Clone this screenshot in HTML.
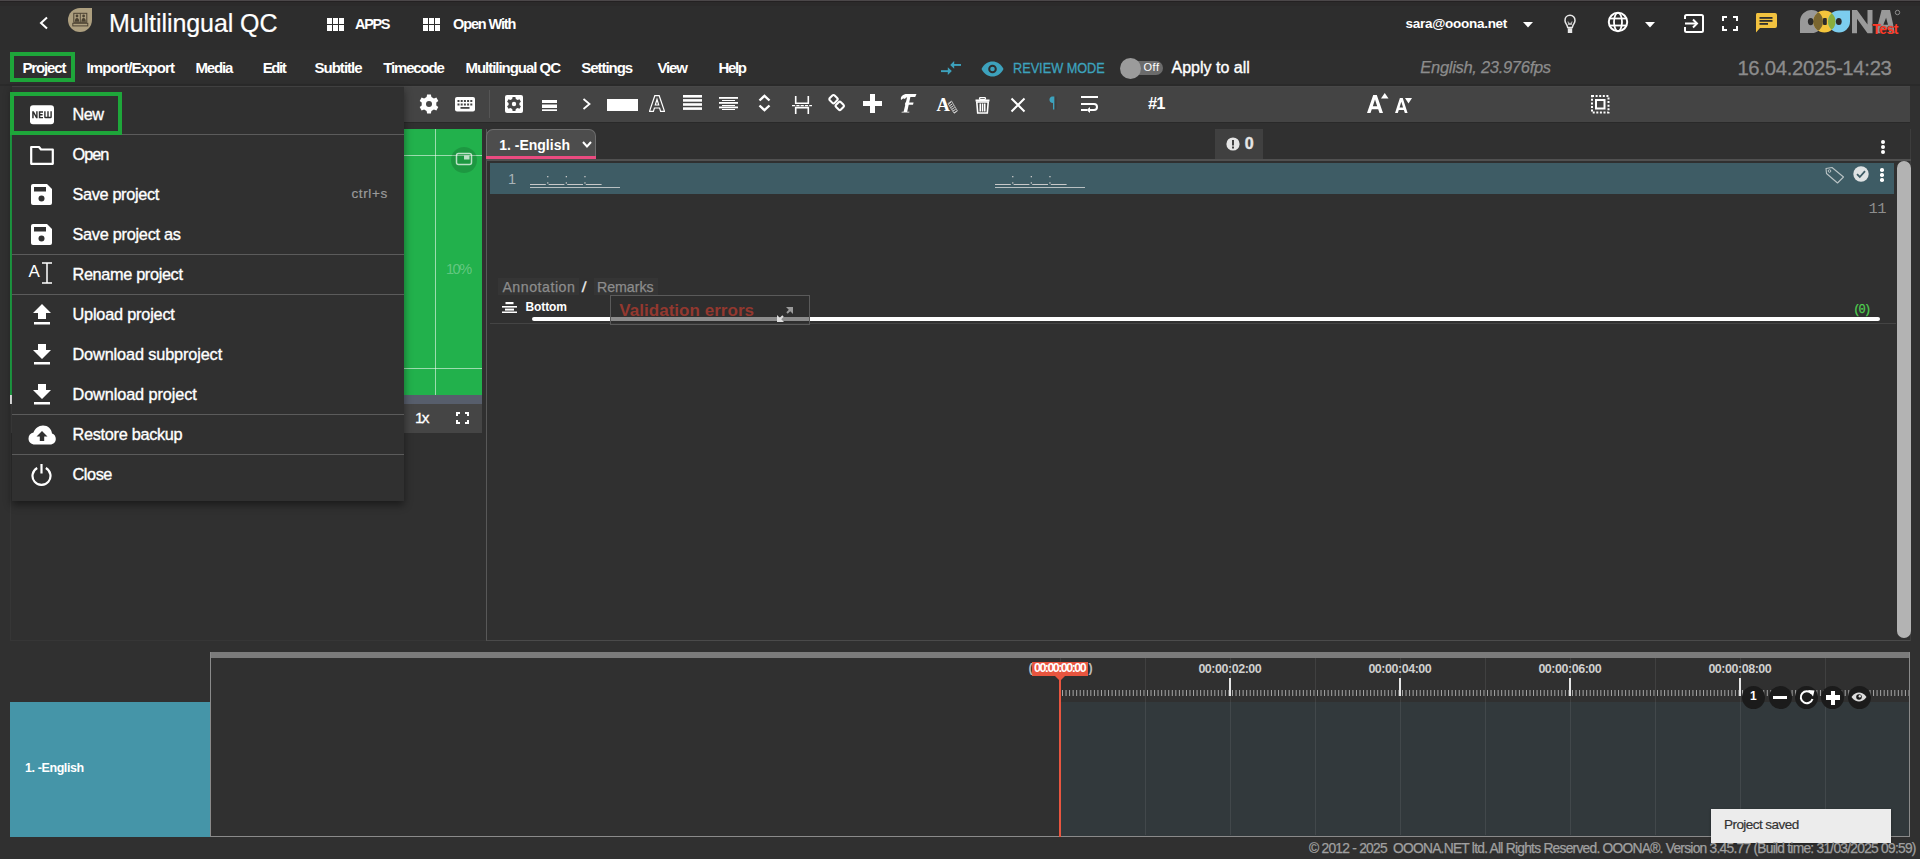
<!DOCTYPE html><html><head><meta charset="utf-8"><style>
html,body{margin:0;padding:0;}
body{width:1920px;height:859px;overflow:hidden;position:relative;background:#303030;font-family:'Liberation Sans',sans-serif;}
.t{position:absolute;white-space:nowrap;line-height:1;}
.r{position:absolute;display:block;}
</style></head><body>
<div class="r" style="left:0px;top:0px;width:1920px;height:50px;background:#2d2d2d;"></div>
<div class="r" style="left:0px;top:50px;width:1920px;height:36px;background:#2f2f2f;"></div>
<div class="r" style="left:0px;top:84px;width:1920px;height:2px;background:#2a2a2a;"></div>
<div class="r" style="left:0px;top:0px;width:1920px;height:1px;background:#4b4749;"></div>
<div class="r" style="left:0px;top:1px;width:1920px;height:1px;background:#242122;"></div>
<div class="r" style="left:0px;top:2px;width:1920px;height:4px;background:#2b2a2a;"></div>
<svg class="r" style="left:36px;top:14px;" width="16" height="18" viewBox="0 0 16 18"><polyline points="11,3.5 5,9 11,14.5" fill="none" stroke="#fff" stroke-width="2"/></svg>
<svg class="r" style="left:68px;top:8px;" width="24" height="24" viewBox="0 0 24 24"><path d="M12,0 H24 V12 A12,12 0 1 1 12,0 Z" fill="#ad9f7f"/><rect x="5.8" y="5.3" width="13" height="9" fill="none" stroke="#4b4232" stroke-width="1"/><line x1="12.3" y1="5.3" x2="12.3" y2="14.3" stroke="#4b4232" stroke-width="0.9"/><circle cx="9" cy="8" r="1.4" fill="#4b4232"/><path d="M6.8,13.8 Q6.8,10 9,10 Q11.2,10 11.2,13.8Z" fill="#4b4232"/><circle cx="15.6" cy="8" r="1.4" fill="#4b4232"/><path d="M13.4,13.8 Q13.4,10 15.6,10 Q17.8,10 17.8,13.8Z" fill="#4b4232"/><rect x="4.8" y="15.3" width="15" height="2.6" fill="none" stroke="#4b4232" stroke-width="1"/></svg>
<div class="t" style="left:109.0px;top:10.60px;font-family:'Liberation Sans',sans-serif;font-weight:400;font-style:normal;font-size:25px;color:#fff;letter-spacing:-0.071px;-webkit-text-stroke:0.2px #fff;">Multilingual QC</div>
<svg class="r" style="left:327px;top:18px;" width="17" height="13" viewBox="0 0 17 13"><rect x="0" y="0" width="5" height="6" fill="#fff"/><rect x="0" y="7" width="5" height="6" fill="#fff"/><rect x="6" y="0" width="5" height="6" fill="#fff"/><rect x="6" y="7" width="5" height="6" fill="#fff"/><rect x="12" y="0" width="5" height="6" fill="#fff"/><rect x="12" y="7" width="5" height="6" fill="#fff"/></svg>
<div class="t" style="left:355.0px;top:17.28px;font-family:'Liberation Sans',sans-serif;font-weight:700;font-style:normal;font-size:14.5px;color:#fff;letter-spacing:-1.333px;">APPS</div>
<svg class="r" style="left:423px;top:18px;" width="17" height="13" viewBox="0 0 17 13"><rect x="0" y="0" width="5" height="6" fill="#fff"/><rect x="0" y="7" width="5" height="6" fill="#fff"/><rect x="6" y="0" width="5" height="6" fill="#fff"/><rect x="6" y="7" width="5" height="6" fill="#fff"/><rect x="12" y="0" width="5" height="6" fill="#fff"/><rect x="12" y="7" width="5" height="6" fill="#fff"/></svg>
<div class="t" style="left:453.0px;top:17.28px;font-family:'Liberation Sans',sans-serif;font-weight:700;font-style:normal;font-size:14.5px;color:#fff;letter-spacing:-1.125px;">Open With</div>
<div class="t" style="left:1405.5px;top:16.84px;font-family:'Liberation Sans',sans-serif;font-weight:700;font-style:normal;font-size:13.5px;color:#fff;letter-spacing:-0.277px;">sara@ooona.net</div>
<svg class="r" style="left:1523px;top:22px;" width="10" height="6" viewBox="0 0 10 6"><polygon points="0,0 10,0 5,5.5" fill="#fff"/></svg>
<svg class="r" style="left:1564px;top:14px;" width="12" height="20" viewBox="0 0 12 20"><path d="M6,1.3 C3,1.3 1,3.6 1,6.4 C1,8.6 2.4,10 3.1,11.6 L3.7,13.6 H8.3 L8.9,11.6 C9.6,10 11,8.6 11,6.4 C11,3.6 9,1.3 6,1.3 Z" fill="none" stroke="#e8e8e8" stroke-width="1.5"/><polyline points="4,7.5 5,11 6,8.8 7,11 8,7.5" fill="none" stroke="#d8d8d8" stroke-width="0.9"/><rect x="3.8" y="14.2" width="4.4" height="4.8" fill="#e8e8e8"/></svg>
<svg class="r" style="left:1606px;top:11px;" width="24" height="22" viewBox="0 0 24 22"><circle cx="12" cy="11" r="9.2" fill="none" stroke="#fff" stroke-width="2"/><ellipse cx="12" cy="11" rx="4" ry="9.2" fill="none" stroke="#fff" stroke-width="1.8"/><line x1="3" y1="7.5" x2="21" y2="7.5" stroke="#fff" stroke-width="1.8"/><line x1="3" y1="14.5" x2="21" y2="14.5" stroke="#fff" stroke-width="1.8"/></svg>
<svg class="r" style="left:1645px;top:22px;" width="10" height="6" viewBox="0 0 10 6"><polygon points="0,0 10,0 5,5.5" fill="#fff"/></svg>
<svg class="r" style="left:1684px;top:14px;" width="20" height="19" viewBox="0 0 20 19"><path d="M1,5 V2.5 A1.5,1.5 0 0 1 2.5,1 H17.5 A1.5,1.5 0 0 1 19,2.5 V16.5 A1.5,1.5 0 0 1 17.5,18 H2.5 A1.5,1.5 0 0 1 1,16.5 V13" fill="none" stroke="#fff" stroke-width="2"/><line x1="1" y1="9.5" x2="13" y2="9.5" stroke="#fff" stroke-width="2"/><polyline points="9,5.5 13,9.5 9,13.5" fill="none" stroke="#fff" stroke-width="2"/></svg>
<svg class="r" style="left:1722px;top:16px;" width="16" height="15" viewBox="0 0 16 15"><path d="M1,5 V1 H5 M11,1 H15 V5 M15,10 V14 H11 M5,14 H1 V10" fill="none" stroke="#fff" stroke-width="2"/></svg>
<svg class="r" style="left:1755px;top:13px;" width="22" height="20" viewBox="0 0 22 20"><path d="M2,0 H20 A2,2 0 0 1 22,2 V13 A2,2 0 0 1 20,15 H5 L1,19.5 V2 A2,2 0 0 1 2,0 Z" fill="#f2c23f"/><rect x="4.5" y="4" width="13" height="1.8" fill="#2e2e2e"/><rect x="4.5" y="7" width="13" height="1.8" fill="#2e2e2e"/><rect x="4.5" y="10" width="8.5" height="1.8" fill="#2e2e2e"/></svg>
<svg class="r" style="left:1796px;top:4px;" width="112" height="34" viewBox="0 0 112 34"><defs><clipPath id="cy"><circle cx="28.4" cy="17.5" r="11.1"/></clipPath></defs><path d="M4,29 V17.5 A11.5,11.5 0 0 1 27,17.5 A11.5,11.5 0 0 1 15.5,29 Z" fill="#999"/><circle cx="28.4" cy="17.5" r="11.1" fill="#f4c53c"/><path d="M4,29 V17.5 A11.5,11.5 0 0 1 27,17.5 A11.5,11.5 0 0 1 15.5,29 Z" fill="#7a6630" clip-path="url(#cy)"/><path d="M43,6.5 H54 V17.5 A11,11 0 0 1 32,17.5 A11,11 0 0 1 43,6.5 Z" fill="#7ccdee"/><path d="M43,6.5 H54 V17.5 A11,11 0 0 1 32,17.5 A11,11 0 0 1 43,6.5 Z" fill="#8aae3c" clip-path="url(#cy)"/><ellipse cx="14.7" cy="17.6" rx="2.8" ry="3.6" fill="#2b2b2b"/><rect x="27" y="14" width="3.8" height="7" rx="1" fill="#2b2b2b"/><ellipse cx="42.8" cy="17.5" rx="2.9" ry="3.6" fill="#2b2b2b"/><path d="M56,29.3 V6 H61 L71.5,20.5 V6 H76.5 V29.3 H71.5 L61,14.8 V29.3 Z" fill="#999"/><path d="M79.7,29.3 L85.6,6 H94 L99,29.3 H93.5 L92.6,25 H86.4 L85.4,29.3 Z M87.3,20.8 H92 L90.1,13.8 Z" fill="#999" fill-rule="evenodd"/><circle cx="101.5" cy="8.5" r="2.2" fill="none" stroke="#999" stroke-width="0.9"/></svg>
<div class="t" style="left:1872.3px;top:22.99px;font-family:'Liberation Sans',sans-serif;font-weight:700;font-style:normal;font-size:13.8px;color:#ff3a28;letter-spacing:-0.433px;text-shadow:0 0 1px #222;">Test</div>
<div class="r" style="left:10px;top:52px;width:65px;height:30px;background:transparent;border:4px solid #1ea63a;box-sizing:border-box;"></div>
<div class="t" style="left:22.4px;top:60.40px;font-family:'Liberation Sans',sans-serif;font-weight:700;font-style:normal;font-size:15px;color:#fff;letter-spacing:-1.133px;">Project</div>
<div class="t" style="left:86.5px;top:60.30px;font-family:'Liberation Sans',sans-serif;font-weight:700;font-style:normal;font-size:15px;color:#fff;letter-spacing:-0.817px;">Import/Export</div>
<div class="t" style="left:195.4px;top:60.30px;font-family:'Liberation Sans',sans-serif;font-weight:700;font-style:normal;font-size:15px;color:#fff;letter-spacing:-1.150px;">Media</div>
<div class="t" style="left:262.7px;top:60.30px;font-family:'Liberation Sans',sans-serif;font-weight:700;font-style:normal;font-size:15px;color:#fff;letter-spacing:-1.400px;">Edit</div>
<div class="t" style="left:314.5px;top:60.30px;font-family:'Liberation Sans',sans-serif;font-weight:700;font-style:normal;font-size:15px;color:#fff;letter-spacing:-0.986px;">Subtitle</div>
<div class="t" style="left:383.2px;top:60.30px;font-family:'Liberation Sans',sans-serif;font-weight:700;font-style:normal;font-size:15px;color:#fff;letter-spacing:-1.143px;">Timecode</div>
<div class="t" style="left:465.5px;top:60.30px;font-family:'Liberation Sans',sans-serif;font-weight:700;font-style:normal;font-size:15px;color:#fff;letter-spacing:-1.036px;">Multilingual QC</div>
<div class="t" style="left:581.3px;top:60.30px;font-family:'Liberation Sans',sans-serif;font-weight:700;font-style:normal;font-size:15px;color:#fff;letter-spacing:-1.043px;">Settings</div>
<div class="t" style="left:657.4px;top:60.30px;font-family:'Liberation Sans',sans-serif;font-weight:700;font-style:normal;font-size:15px;color:#fff;letter-spacing:-1.167px;">View</div>
<div class="t" style="left:718.4px;top:60.30px;font-family:'Liberation Sans',sans-serif;font-weight:700;font-style:normal;font-size:15px;color:#fff;letter-spacing:-1.333px;">Help</div>
<svg class="r" style="left:940px;top:60px;" width="22" height="16" viewBox="0 0 22 16"><polygon points="10.2,4.9 14.2,1 14.2,8.8" fill="#3da2bd"/><rect x="14" y="4" width="7" height="1.9" fill="#3da2bd"/><polygon points="11.8,11.1 7.8,7.2 7.8,15" fill="#3da2bd"/><rect x="1" y="10.2" width="7" height="1.9" fill="#3da2bd"/></svg>
<svg class="r" style="left:981px;top:61px;" width="23" height="16" viewBox="0 0 23 16"><path d="M0.5,8 C3.5,2.5 7,0.5 11.5,0.5 C16,0.5 19.5,2.5 22.5,8 C19.5,13.5 16,15.5 11.5,15.5 C7,15.5 3.5,13.5 0.5,8Z" fill="#3da2bd"/><circle cx="11.5" cy="8" r="4.3" fill="#2e2e2e"/><circle cx="11.5" cy="8" r="2.3" fill="#3da2bd"/></svg>
<div class="t" style="left:1013.4px;top:60.58px;font-family:'Liberation Sans',sans-serif;font-weight:400;font-style:normal;font-size:14.5px;color:#3da2bd;transform:scaleX(0.8762);transform-origin:0 0;-webkit-text-stroke:0.3px #3da2bd;">REVIEW MODE</div>
<div class="r" style="left:1121px;top:61px;width:42px;height:14px;background:#6b6b6b;border-radius:7px;"></div>
<div class="r" style="left:1120px;top:58px;width:21px;height:21px;background:#9b9b9b;border-radius:50%;"></div>
<div class="t" style="left:1143.5px;top:62.24px;font-family:'Liberation Sans',sans-serif;font-weight:400;font-style:normal;font-size:11px;color:#fff;letter-spacing:0.500px;">Off</div>
<div class="t" style="left:1171.5px;top:59.84px;font-family:'Liberation Sans',sans-serif;font-weight:400;font-style:normal;font-size:16px;color:#fff;letter-spacing:0.000px;-webkit-text-stroke:0.35px #fff;">Apply to all</div>
<div class="t" style="left:1420.3px;top:58.76px;font-family:'Liberation Sans',sans-serif;font-weight:400;font-style:italic;font-size:16.5px;color:#8c8c8c;letter-spacing:-0.294px;-webkit-text-stroke:0.25px #8c8c8c;">English, 23.976fps</div>
<div class="t" style="left:1737.4px;top:57.55px;font-family:'Liberation Sans',sans-serif;font-weight:400;font-style:normal;font-size:20.3px;color:#8c8c8c;letter-spacing:-0.300px;-webkit-text-stroke:0.3px #8c8c8c;">16.04.2025-14:23</div>
<div class="r" style="left:10px;top:129px;width:472px;height:266px;background:#22b14c;"></div>
<div class="r" style="left:435px;top:129px;width:1px;height:266px;background:rgba(255,255,255,0.55);"></div>
<div class="r" style="left:404px;top:155px;width:78px;height:1px;background:rgba(255,255,255,0.55);"></div>
<div class="r" style="left:404px;top:368px;width:78px;height:1px;background:rgba(255,255,255,0.55);"></div>
<div class="r" style="left:10px;top:395px;width:472px;height:9px;background:#575e6c;"></div>
<div class="r" style="left:10px;top:395px;width:2px;height:9px;background:#fff;"></div>
<div class="r" style="left:10px;top:404px;width:472px;height:29px;background:#454545;"></div>
<div class="t" style="left:415.0px;top:409.92px;font-family:'Liberation Sans',sans-serif;font-weight:400;font-style:normal;font-size:15.5px;color:#fff;letter-spacing:-1.800px;-webkit-text-stroke:0.3px #fff;">1x</div>
<svg class="r" style="left:456px;top:412px;" width="13" height="12" viewBox="0 0 13 12"><path d="M1,4 V1 H4 M9,1 H12 V4 M12,8 V11 H9 M4,11 H1 V8" fill="none" stroke="#fff" stroke-width="2"/></svg>
<div class="t" style="left:446.0px;top:262.18px;font-family:'Liberation Sans',sans-serif;font-weight:400;font-style:normal;font-size:14.5px;color:rgba(255,255,255,0.3);letter-spacing:-1.500px;">10%</div>
<div class="r" style="left:451px;top:147px;width:26px;height:26px;background:rgba(0,0,0,0.14);border-radius:50%;"></div>
<svg class="r" style="left:455px;top:152px;" width="18" height="15" viewBox="0 0 18 15"><rect x="1.5" y="1.5" width="15" height="11" rx="2" fill="none" stroke="rgba(255,255,255,0.7)" stroke-width="1.5"/><rect x="9" y="3.5" width="5.5" height="4" fill="rgba(255,255,255,0.7)"/></svg>
<div class="r" style="left:10px;top:404px;width:1px;height:236px;background:#363636;"></div>
<div class="r" style="left:10px;top:640px;width:1900px;height:1px;background:#363636;"></div>
<div class="r" style="left:404px;top:86px;width:1506px;height:36px;background:#444444;"></div>
<div class="r" style="left:404px;top:86px;width:1506px;height:1px;background:#484848;"></div>
<div class="r" style="left:404px;top:122px;width:1506px;height:1px;background:#292929;"></div>
<div class="r" style="left:489px;top:90px;width:1px;height:28px;background:#555;"></div>
<svg class="r" style="left:419px;top:94px;" width="20" height="20" viewBox="0 0 20 20"><g transform="translate(10,10)"><path d="M-1.9,-9.5 H1.9 L2.4,-6.9 L4.9,-5.4 L7.4,-6.4 L9.3,-3.1 L7.3,-1.4 V1.4 L9.3,3.1 L7.4,6.4 L4.9,5.4 L2.4,6.9 L1.9,9.5 H-1.9 L-2.4,6.9 L-4.9,5.4 L-7.4,6.4 L-9.3,3.1 L-7.3,1.4 V-1.4 L-9.3,-3.1 L-7.4,-6.4 L-4.9,-5.4 L-2.4,-6.9 Z" fill="#fff"/><circle r="3" fill="#464646"/></g></svg>
<svg class="r" style="left:455px;top:97px;" width="20" height="15" viewBox="0 0 20 15"><rect x="0" y="0" width="20" height="14.5" rx="2" fill="#fff"/><rect x="2.5" y="3" width="2" height="2" fill="#464646"/><rect x="2.5" y="6.5" width="2" height="2" fill="#464646"/><rect x="5.7" y="3" width="2" height="2" fill="#464646"/><rect x="5.7" y="6.5" width="2" height="2" fill="#464646"/><rect x="8.9" y="3" width="2" height="2" fill="#464646"/><rect x="8.9" y="6.5" width="2" height="2" fill="#464646"/><rect x="12.100000000000001" y="3" width="2" height="2" fill="#464646"/><rect x="12.100000000000001" y="6.5" width="2" height="2" fill="#464646"/><rect x="15.3" y="3" width="2" height="2" fill="#464646"/><rect x="15.3" y="6.5" width="2" height="2" fill="#464646"/><rect x="5.5" y="10" width="9" height="1.8" fill="#464646"/></svg>
<svg class="r" style="left:505px;top:95px;" width="18" height="18" viewBox="0 0 18 18"><rect width="18" height="18" rx="2" fill="#fff"/><g transform="translate(9,9)"><path d="M-1.4,-7 H1.4 L1.8,-5.1 L3.6,-4 L5.5,-4.7 L6.9,-2.3 L5.4,-1 V1 L6.9,2.3 L5.5,4.7 L3.6,4 L1.8,5.1 L1.4,7 H-1.4 L-1.8,5.1 L-3.6,4 L-5.5,4.7 L-6.9,2.3 L-5.4,1 V-1 L-6.9,-2.3 L-5.5,-4.7 L-3.6,-4 L-1.8,-5.1 Z" fill="#464646"/><circle r="2.2" fill="#fff"/></g></svg>
<svg class="r" style="left:542px;top:100px;" width="15" height="11" viewBox="0 0 15 11"><rect x="0" y="0" width="15" height="3" fill="#fff"/><rect x="0" y="4.5" width="15" height="3.5" fill="#fff"/><rect x="0" y="9.3" width="15" height="1.7" fill="#fff"/></svg>
<svg class="r" style="left:582px;top:98px;" width="9" height="12" viewBox="0 0 9 12"><polyline points="1.5,1 7.5,6 1.5,11" fill="none" stroke="#fff" stroke-width="1.8"/></svg>
<div class="r" style="left:607px;top:99px;width:31px;height:12px;background:#fff;"></div>
<svg class="r" style="left:649px;top:95px;" width="16" height="17" viewBox="0 0 16 17"><path d="M5.8,0.7 H10.2 L15.5,16.3 H11.6 L10.6,13 H5.4 L4.4,16.3 H0.5 Z M6.3,10 H9.7 L8,4.3 Z" fill="none" stroke="#fff" stroke-width="1.2"/></svg>
<svg class="r" style="left:683px;top:95px;" width="19" height="15" viewBox="0 0 19 15"><rect y="0" width="19" height="2.6" fill="#fff"/><rect y="4.1" width="19" height="2.6" fill="#fff"/><rect y="8.2" width="19" height="2.6" fill="#fff"/><rect y="12.3" width="19" height="2.6" fill="#fff"/></svg>
<svg class="r" style="left:719px;top:97px;" width="19" height="13" viewBox="0 0 19 13"><rect x="0" y="0" width="19" height="1.8" fill="#fff"/><rect x="3" y="3" width="13" height="1" fill="#fff"/><rect x="0" y="5" width="19" height="1.8" fill="#fff"/><rect x="3" y="8" width="13" height="1" fill="#fff"/><rect x="0" y="9.5" width="19" height="1.8" fill="#fff"/><rect x="3" y="12" width="13" height="1" fill="#fff"/></svg>
<svg class="r" style="left:758px;top:94px;" width="13" height="18" viewBox="0 0 13 18"><polyline points="1.5,6.5 6.5,1.8 11.5,6.5" fill="none" stroke="#fff" stroke-width="2.4"/><polyline points="1.5,11.5 6.5,16.2 11.5,11.5" fill="none" stroke="#fff" stroke-width="2.4"/></svg>
<svg class="r" style="left:792px;top:95px;" width="20" height="20" viewBox="0 0 20 20"><path d="M3.7,1 V8.2 H16.3 V1 M3.7,19 V12.6 H16.3 V19" fill="none" stroke="#fff" stroke-width="1.6"/><path d="M0,10.6 H20" stroke="#fff" stroke-width="1.3" stroke-dasharray="3.2,1.1"/></svg>
<svg class="r" style="left:826px;top:92px;" width="21" height="21" viewBox="0 0 21 21"><rect x="4.1" y="3.8" width="6.8" height="6.8" rx="1.6" transform="rotate(45 7.5 7.2)" fill="none" stroke="#fff" stroke-width="2.1"/><rect x="10.4" y="10.5" width="6.8" height="6.8" rx="1.6" transform="rotate(45 13.8 13.9)" fill="none" stroke="#fff" stroke-width="2.1"/></svg>
<svg class="r" style="left:863px;top:94px;" width="19" height="19" viewBox="0 0 19 19"><rect x="7" y="0" width="5" height="19" fill="#fff"/><rect x="0" y="7" width="19" height="5" fill="#fff"/></svg>
<svg class="r" style="left:899px;top:92px;" width="19" height="22" viewBox="0 0 19 22"><path d="M2,8 C1.2,4.5 4,2 8,2 H17.5 L16.2,5 H10.5 C8,5 6.5,5.5 6,7 C5,6 3.5,6.5 2,8 Z" fill="#fff"/><path d="M8.3,4.5 H11.5 L8.2,19.8 H10.5 L10.2,20.6 H2.5 L2.8,19.8 H4.6 Z" fill="#fff"/><path d="M6.4,10.6 H14.6 L14,12.8 H5.9 Z" fill="#fff"/></svg>
<div class="t" style="left:936.5px;top:96.3px;font-family:'Liberation Serif',serif;font-weight:700;font-size:18.5px;color:#fff;">A</div>
<svg class="r" style="left:945px;top:100px;" width="13" height="14" viewBox="0 0 13 14"><path d="M3,3.5 L6.5,1 L12.5,11 L9,13.2 Z" fill="#444"/><path d="M3.5,4 L6.3,2 M4.6,5.8 L7.4,3.8 M5.7,7.6 L8.5,5.6 M6.8,9.4 L9.6,7.4 M7.9,11.2 L10.7,9.2 M9,13 L11.8,11" stroke="#e0e0e0" stroke-width="1"/><path d="M3,3.5 L6.5,1 L12.5,11 L9,13.2 Z" fill="none" stroke="#ddd" stroke-width="0.7"/></svg>
<svg class="r" style="left:975px;top:97px;" width="15" height="17" viewBox="0 0 15 17"><rect x="4.5" y="0.6" width="6" height="2" rx="1" fill="none" stroke="#fff" stroke-width="1.3"/><rect x="0.5" y="2.5" width="14" height="2" fill="#fff"/><path d="M1.8,5 H13.2 L12.3,16 H2.7 Z" fill="none" stroke="#fff" stroke-width="1.6"/><rect x="4.5" y="6.5" width="1.5" height="8" fill="#fff"/><rect x="6.8" y="6.5" width="1.5" height="8" fill="#fff"/><rect x="9" y="6.5" width="1.5" height="8" fill="#fff"/></svg>
<svg class="r" style="left:1010px;top:97px;" width="16" height="16" viewBox="0 0 16 16"><path d="M1.5,1.5 L14.5,14.5 M14.5,1.5 L1.5,14.5" stroke="#fff" stroke-width="2"/></svg>
<svg class="r" style="left:1049px;top:96px;" width="8" height="14" viewBox="0 0 8 14"><path d="M4,0.5 C1,0.5 0.5,2.5 0.5,4 C0.5,5.5 1.5,7 4,7 V13.5 H5.3 V0.5 Z" fill="#3da2bd"/><rect x="6.3" y="0.5" width="1.2" height="13" fill="#3a3a3a"/></svg>
<svg class="r" style="left:1081px;top:96px;" width="18" height="17" viewBox="0 0 18 17"><rect x="0" y="0" width="17" height="2" fill="#fff"/><path d="M0,8 H13 A3,3 0 0 1 13,14 H9" fill="none" stroke="#fff" stroke-width="2"/><polygon points="9,11 9,17 5.5,14" fill="#fff"/><rect x="0" y="13" width="6" height="2" fill="#fff"/></svg>
<div class="t" style="left:1148.0px;top:95.26px;font-family:'Liberation Sans',sans-serif;font-weight:700;font-style:normal;font-size:16.5px;color:#fff;letter-spacing:-1.000px;">#1</div>
<svg class="r" style="left:1367px;top:95px;" width="17" height="18" viewBox="0 0 17 18"><path d="M0,18 L6.2,0 H9.8 L16,18 H12.5 L11.2,14.2 H4.8 L3.5,18 Z M5.8,11.2 H10.2 L8,4.6 Z" fill="#fff" fill-rule="evenodd"/></svg>
<svg class="r" style="left:1381px;top:93px;" width="8" height="6" viewBox="0 0 8 6"><polygon points="0,5.5 7.5,5.5 3.75,0" fill="#fff"/></svg>
<svg class="r" style="left:1395px;top:97.5px;" width="13" height="15" viewBox="0 0 13 15"><g transform="scale(0.79,0.84)"><path d="M0,18 L6.2,0 H9.8 L16,18 H12.5 L11.2,14.2 H4.8 L3.5,18 Z M5.8,11.2 H10.2 L8,4.6 Z" fill="#fff" fill-rule="evenodd"/></g></svg>
<svg class="r" style="left:1405px;top:97.5px;" width="7" height="6" viewBox="0 0 7 6"><polygon points="0,0 7,0 3.5,5.5" fill="#fff"/></svg>
<svg class="r" style="left:1591px;top:95px;" width="19" height="19" viewBox="0 0 19 19"><rect x="5" y="5" width="8.5" height="8.5" fill="none" stroke="#fff" stroke-width="2"/><path d="M1,1 H17.5 V17.5 H1 Z" fill="none" stroke="#fff" stroke-width="2" stroke-dasharray="2,1.6"/></svg>
<div class="r" style="left:12px;top:86px;width:392px;height:415px;background:#303030;box-shadow:0 4px 8px rgba(0,0,0,0.45);border-top:1px solid #404040;box-sizing:border-box;"></div>
<div class="r" style="left:12px;top:85px;width:392px;height:1px;background:#292929;"></div>
<div class="r" style="left:12px;top:134px;width:392px;height:1px;background:#5b5b5b;"></div>
<div class="r" style="left:12px;top:254px;width:392px;height:1px;background:#5b5b5b;"></div>
<div class="r" style="left:12px;top:294px;width:392px;height:1px;background:#5b5b5b;"></div>
<div class="r" style="left:12px;top:414px;width:392px;height:1px;background:#5b5b5b;"></div>
<div class="r" style="left:12px;top:454px;width:392px;height:1px;background:#5b5b5b;"></div>
<div class="r" style="left:10px;top:92px;width:112px;height:43px;background:transparent;border:4px solid #1ea63a;box-sizing:border-box;"></div>
<div class="t" style="left:72.5px;top:105.59px;font-family:'Liberation Sans',sans-serif;font-weight:400;font-style:normal;font-size:16.3px;color:#fff;letter-spacing:-0.500px;-webkit-text-stroke:0.35px #fff;">New</div>
<div class="t" style="left:72.5px;top:145.59px;font-family:'Liberation Sans',sans-serif;font-weight:400;font-style:normal;font-size:16.3px;color:#fff;letter-spacing:-1.000px;-webkit-text-stroke:0.35px #fff;">Open</div>
<div class="t" style="left:72.5px;top:185.59px;font-family:'Liberation Sans',sans-serif;font-weight:400;font-style:normal;font-size:16.3px;color:#fff;letter-spacing:-0.345px;-webkit-text-stroke:0.35px #fff;">Save project</div>
<div class="t" style="left:72.5px;top:225.59px;font-family:'Liberation Sans',sans-serif;font-weight:400;font-style:normal;font-size:16.3px;color:#fff;letter-spacing:-0.271px;-webkit-text-stroke:0.35px #fff;">Save project as</div>
<div class="t" style="left:72.5px;top:265.59px;font-family:'Liberation Sans',sans-serif;font-weight:400;font-style:normal;font-size:16.3px;color:#fff;letter-spacing:-0.346px;-webkit-text-stroke:0.35px #fff;">Rename project</div>
<div class="t" style="left:72.5px;top:305.59px;font-family:'Liberation Sans',sans-serif;font-weight:400;font-style:normal;font-size:16.3px;color:#fff;letter-spacing:-0.200px;-webkit-text-stroke:0.35px #fff;">Upload project</div>
<div class="t" style="left:72.5px;top:345.59px;font-family:'Liberation Sans',sans-serif;font-weight:400;font-style:normal;font-size:16.3px;color:#fff;letter-spacing:-0.133px;-webkit-text-stroke:0.35px #fff;">Download subproject</div>
<div class="t" style="left:72.5px;top:385.59px;font-family:'Liberation Sans',sans-serif;font-weight:400;font-style:normal;font-size:16.3px;color:#fff;letter-spacing:-0.107px;-webkit-text-stroke:0.35px #fff;">Download project</div>
<div class="t" style="left:72.5px;top:425.59px;font-family:'Liberation Sans',sans-serif;font-weight:400;font-style:normal;font-size:16.3px;color:#fff;letter-spacing:-0.300px;-webkit-text-stroke:0.35px #fff;">Restore backup</div>
<div class="t" style="left:72.5px;top:465.59px;font-family:'Liberation Sans',sans-serif;font-weight:400;font-style:normal;font-size:16.3px;color:#fff;letter-spacing:-0.425px;-webkit-text-stroke:0.35px #fff;">Close</div>
<div class="t" style="left:351.4px;top:187.34px;font-family:'Liberation Sans',sans-serif;font-weight:400;font-style:normal;font-size:13.5px;color:#9a9a9a;letter-spacing:0.660px;-webkit-text-stroke:0.2px #9a9a9a;">ctrl+s</div>
<svg class="r" style="left:30px;top:105px;" width="24" height="20" viewBox="0 0 24 20"><rect x="0" y="0.3" width="24" height="19" rx="3" fill="#fff"/><path d="M2.2,13.3 V6.3 H3.8 L6.2,10.6 V6.3 H7.6 V13.3 H6.1 L3.7,9 V13.3 Z M8.8,6.3 H13 V7.7 H10.3 V9.1 H12.6 V10.5 H10.3 V11.9 H13 V13.3 H8.8 Z M14.2,6.3 H15.6 V11.8 H17.3 V6.3 H18.7 V11.8 H20.4 V6.3 H21.8 V12 Q21.8,13.3 20.5,13.3 H15.5 Q14.2,13.3 14.2,12 Z" fill="#2e2e2e"/></svg>
<svg class="r" style="left:30px;top:145px;" width="24" height="20" viewBox="0 0 24 20"><path d="M1.2,2 H9 L11,4.5 H22.8 V18.8 H1.2 Z" fill="none" stroke="#fff" stroke-width="2.2" stroke-linejoin="round"/></svg>
<svg class="r" style="left:31px;top:184px;" width="21" height="21" viewBox="0 0 21 21"><path d="M2,0 H16 L21,5 V19 A2,2 0 0 1 19,21 H2 A2,2 0 0 1 0,19 V2 A2,2 0 0 1 2,0 Z" fill="#fff"/><rect x="3" y="3" width="12" height="4.5" fill="#303030"/><circle cx="10.5" cy="14.5" r="3" fill="#303030"/></svg>
<svg class="r" style="left:31px;top:224px;" width="21" height="21" viewBox="0 0 21 21"><path d="M2,0 H16 L21,5 V19 A2,2 0 0 1 19,21 H2 A2,2 0 0 1 0,19 V2 A2,2 0 0 1 2,0 Z" fill="#fff"/><rect x="3" y="3" width="12" height="4.5" fill="#303030"/><circle cx="10.5" cy="14.5" r="3" fill="#303030"/></svg>
<div class="t" style="left:28.5px;top:262.78px;font-family:'Liberation Sans',sans-serif;font-weight:400;font-style:normal;font-size:17px;color:#fff;">A</div>
<svg class="r" style="left:41px;top:262px;" width="12" height="22" viewBox="0 0 12 22"><path d="M1,1 H11 M6,1 V21 M1,21 H11" stroke="#fff" stroke-width="1.5" fill="none"/></svg>
<svg class="r" style="left:33px;top:304px;" width="18" height="21" viewBox="0 0 18 21"><polygon points="9,0 0,9 5,9 5,15 13,15 13,9 18,9" fill="#fff"/><rect x="1" y="18" width="16" height="2.5" fill="#fff"/></svg>
<svg class="r" style="left:33px;top:344px;" width="18" height="21" viewBox="0 0 18 21"><polygon points="9,15 0,6 5,6 5,0 13,0 13,6 18,6" fill="#fff"/><rect x="1" y="18" width="16" height="2.5" fill="#fff"/></svg>
<svg class="r" style="left:33px;top:384px;" width="18" height="21" viewBox="0 0 18 21"><polygon points="9,15 0,6 5,6 5,0 13,0 13,6 18,6" fill="#fff"/><rect x="1" y="18" width="16" height="2.5" fill="#fff"/></svg>
<svg class="r" style="left:28px;top:425px;" width="28" height="20" viewBox="0 0 28 20"><path d="M7,19.5 C3,19.5 0.5,17 0.5,13.5 C0.5,10.5 2.5,8 5.5,7.5 C7,3.5 10.5,0.5 15,0.5 C20,0.5 23.5,4 24,8.5 C26.5,9.2 27.8,11.5 27.8,14 C27.8,17 25.5,19.5 22,19.5 Z" fill="#fff"/><polygon points="14,6 8.5,11.5 11.8,11.5 11.8,16 16.2,16 16.2,11.5 19.5,11.5" fill="#303030"/></svg>
<svg class="r" style="left:30px;top:463px;" width="23" height="23" viewBox="0 0 23 23"><path d="M7.2,5 A9,9 0 1 0 15.8,5" fill="none" stroke="#fff" stroke-width="2.2"/><line x1="11.5" y1="1" x2="11.5" y2="10.5" stroke="#fff" stroke-width="2.2"/></svg>
<div class="r" style="left:486px;top:129px;width:1425px;height:512px;background:transparent;border-left:1px solid #585858;border-right:1px solid #3d3d3d;border-bottom:1px solid #4a4a4a;box-sizing:border-box;"></div>
<div class="r" style="left:486px;top:129px;width:110px;height:30px;background:#4d4d4d;border:1px solid #6d6d6d;border-bottom:none;border-radius:7px 7px 0 0;box-sizing:border-box;"></div>
<div class="r" style="left:486px;top:156px;width:110px;height:3px;background:#eb4b80;"></div>
<div class="t" style="left:499.2px;top:137.66px;font-family:'Liberation Sans',sans-serif;font-weight:700;font-style:normal;font-size:14px;color:#fff;letter-spacing:0.000px;">1. -English</div>
<svg class="r" style="left:582px;top:141px;" width="10" height="7" viewBox="0 0 10 7"><polyline points="1,1 5,5.5 9,1" fill="none" stroke="#fff" stroke-width="2"/></svg>
<div class="r" style="left:596px;top:159px;width:1315px;height:2px;background:#505050;"></div>
<div class="r" style="left:486px;top:159px;width:110px;height:2px;background:#505050;"></div>
<div class="r" style="left:1215px;top:129px;width:48px;height:30px;background:#404040;"></div>
<svg class="r" style="left:1226px;top:137px;" width="14" height="14" viewBox="0 0 14 14"><circle cx="7" cy="7" r="6.6" fill="#e6e6e6"/><rect x="6" y="3" width="2" height="5.5" fill="#404040"/><rect x="6" y="9.5" width="2" height="2" fill="#404040"/></svg>
<div class="t" style="left:1244.7px;top:136.44px;font-family:'Liberation Sans',sans-serif;font-weight:700;font-style:normal;font-size:16px;color:#e6e6e6;-webkit-text-stroke:0.4px #e6e6e6;">0</div>
<div class="r" style="left:1881px;top:140px;width:4px;height:4px;background:#fff;border-radius:50%;"></div>
<div class="r" style="left:1881px;top:145px;width:4px;height:4px;background:#fff;border-radius:50%;"></div>
<div class="r" style="left:1881px;top:150px;width:4px;height:4px;background:#fff;border-radius:50%;"></div>
<div class="r" style="left:490px;top:163px;width:1404px;height:31px;background:#3e5c65;"></div>
<div class="t" style="left:508.0px;top:171.58px;font-family:'Liberation Sans',sans-serif;font-weight:400;font-style:normal;font-size:14.5px;color:#a9b4b7;">1</div>
<svg class="r" style="left:530px;top:175px;" width="92" height="14" viewBox="0 0 92 14"><rect x="0.0" y="9" width="15.8" height="1" fill="#c8c8c8"/><rect x="18.6" y="9" width="15.8" height="1" fill="#c8c8c8"/><rect x="37.2" y="9" width="15.8" height="1" fill="#c8c8c8"/><rect x="55.8" y="9" width="15.8" height="1" fill="#c8c8c8"/><rect x="17.1" y="1" width="1.3" height="1.3" fill="#c8c8c8"/><rect x="17.1" y="7.3" width="1.3" height="1.3" fill="#c8c8c8"/><rect x="35.7" y="1" width="1.3" height="1.3" fill="#c8c8c8"/><rect x="35.7" y="7.3" width="1.3" height="1.3" fill="#c8c8c8"/><rect x="54.3" y="1" width="1.3" height="1.3" fill="#c8c8c8"/><rect x="54.3" y="7.3" width="1.3" height="1.3" fill="#c8c8c8"/><rect x="0" y="12" width="90" height="1" fill="#b8c0c2"/></svg>
<svg class="r" style="left:995px;top:175px;" width="92" height="14" viewBox="0 0 92 14"><rect x="0.0" y="9" width="15.8" height="1" fill="#c8c8c8"/><rect x="18.6" y="9" width="15.8" height="1" fill="#c8c8c8"/><rect x="37.2" y="9" width="15.8" height="1" fill="#c8c8c8"/><rect x="55.8" y="9" width="15.8" height="1" fill="#c8c8c8"/><rect x="17.1" y="1" width="1.3" height="1.3" fill="#c8c8c8"/><rect x="17.1" y="7.3" width="1.3" height="1.3" fill="#c8c8c8"/><rect x="35.7" y="1" width="1.3" height="1.3" fill="#c8c8c8"/><rect x="35.7" y="7.3" width="1.3" height="1.3" fill="#c8c8c8"/><rect x="54.3" y="1" width="1.3" height="1.3" fill="#c8c8c8"/><rect x="54.3" y="7.3" width="1.3" height="1.3" fill="#c8c8c8"/><rect x="0" y="12" width="90" height="1" fill="#b8c0c2"/></svg>
<svg class="r" style="left:1824px;top:166px;" width="21" height="18" viewBox="0 0 21 18"><path d="M2,2.5 L8,1.5 L19.5,11 L13.5,17 L2.5,7.5 Z" fill="none" stroke="#b9c3c5" stroke-width="1.1" stroke-linejoin="round"/><circle cx="5.5" cy="5" r="1.3" fill="none" stroke="#b9c3c5" stroke-width="1"/></svg>
<svg class="r" style="left:1853px;top:166px;" width="16" height="16" viewBox="0 0 16 16"><circle cx="8" cy="8" r="7.7" fill="#dfe3e4"/><polyline points="4,8.2 6.8,11 12,5.2" fill="none" stroke="#3e5c65" stroke-width="1.8"/></svg>
<div class="r" style="left:1880px;top:168px;width:3.5px;height:3.5px;background:#fff;border-radius:50%;"></div>
<div class="r" style="left:1880px;top:173px;width:3.5px;height:3.5px;background:#fff;border-radius:50%;"></div>
<div class="r" style="left:1880px;top:178px;width:3.5px;height:3.5px;background:#fff;border-radius:50%;"></div>
<div class="t" style="left:1868.5px;top:201.65px;font-family:'Liberation Mono',monospace;font-weight:400;font-style:normal;font-size:15.5px;color:#8d8d8d;letter-spacing:-0.500px;">11</div>
<div class="r" style="left:1897px;top:161px;width:14px;height:477px;background:#b3b3b3;border-radius:7px;"></div>
<div class="r" style="left:498px;top:278px;width:81px;height:17px;background:#353535;"></div>
<div class="r" style="left:594px;top:278px;width:64px;height:17px;background:#353535;"></div>
<div class="t" style="left:502.4px;top:279.73px;font-family:'Liberation Sans',sans-serif;font-weight:400;font-style:normal;font-size:14.2px;color:#8c8c8c;letter-spacing:0.511px;-webkit-text-stroke:0.25px #8c8c8c;">Annotation</div>
<div class="t" style="left:582.0px;top:278.60px;font-family:'Liberation Sans',sans-serif;font-weight:700;font-style:normal;font-size:15px;color:#e0e0e0;transform:skewX(-8deg);">/</div>
<div class="t" style="left:597.0px;top:279.73px;font-family:'Liberation Sans',sans-serif;font-weight:400;font-style:normal;font-size:14.2px;color:#8c8c8c;letter-spacing:-0.033px;-webkit-text-stroke:0.25px #8c8c8c;">Remarks</div>
<svg class="r" style="left:502px;top:302px;" width="15" height="11" viewBox="0 0 15 11"><rect x="3.5" y="0" width="8" height="2.2" fill="#fff"/><rect x="0" y="4" width="15" height="1.6" fill="#fff"/><rect x="3" y="6.6" width="9" height="2" fill="#fff"/><rect x="0" y="9.5" width="15" height="1.5" fill="#fff"/></svg>
<div class="t" style="left:525.4px;top:300.88px;font-family:'Liberation Sans',sans-serif;font-weight:700;font-style:normal;font-size:12px;color:#fff;letter-spacing:-0.080px;">Bottom</div>
<div class="r" style="left:532px;top:317px;width:1348px;height:4px;background:#fff;border-radius:2px;"></div>
<div class="r" style="left:490px;top:323px;width:1406px;height:1px;background:#444;"></div>
<div class="t" style="left:1853.2px;top:304.00px;font-family:'Liberation Mono',monospace;font-weight:400;font-style:normal;font-size:12px;color:#4fcf4f;-webkit-text-stroke:0.25px #4fcf4f;">(</div>
<div class="t" style="left:1858.6px;top:304.00px;font-family:'Liberation Mono',monospace;font-weight:400;font-style:normal;font-size:12px;color:#4fcf4f;-webkit-text-stroke:0.25px #4fcf4f;">0</div>
<div class="t" style="left:1864.0px;top:304.00px;font-family:'Liberation Mono',monospace;font-weight:400;font-style:normal;font-size:12px;color:#4fcf4f;-webkit-text-stroke:0.25px #4fcf4f;">)</div>
<div class="r" style="left:610px;top:295px;width:200px;height:30px;background:rgba(46,46,46,0.55);border:1px solid #5a5a5a;box-sizing:border-box;"></div>
<div class="t" style="left:619.3px;top:302.48px;font-family:'Liberation Sans',sans-serif;font-weight:700;font-style:normal;font-size:17px;color:#93382f;letter-spacing:0.037px;">Validation errors</div>
<svg class="r" style="left:776px;top:306px;" width="18" height="17" viewBox="0 0 18 17"><path d="M10,1 H17 V8 Z" fill="#9a9a9a"/><line x1="16" y1="2" x2="11" y2="7" stroke="#9a9a9a" stroke-width="2"/><path d="M1,9 V16 H8 Z" fill="#ddd"/><line x1="2" y1="15" x2="7" y2="10" stroke="#ddd" stroke-width="2"/></svg>
<div class="r" style="left:210px;top:652px;width:1700px;height:6px;background:#7b7b7b;"></div>
<div class="r" style="left:210px;top:652px;width:1px;height:185px;background:#8a8a8a;"></div>
<div class="r" style="left:1909px;top:652px;width:1px;height:185px;background:#8a8a8a;"></div>
<div class="r" style="left:210px;top:836px;width:1700px;height:1px;background:#8a8a8a;"></div>
<div class="r" style="left:1061px;top:702px;width:848px;height:134px;background:#32393c;"></div>
<div class="r" style="left:1060px;top:658px;width:1px;height:177px;background:rgba(255,255,255,0.08);"></div>
<div class="r" style="left:1145px;top:658px;width:1px;height:177px;background:rgba(255,255,255,0.08);"></div>
<div class="r" style="left:1230px;top:658px;width:1px;height:177px;background:rgba(255,255,255,0.08);"></div>
<div class="r" style="left:1315px;top:658px;width:1px;height:177px;background:rgba(255,255,255,0.08);"></div>
<div class="r" style="left:1400px;top:658px;width:1px;height:177px;background:rgba(255,255,255,0.08);"></div>
<div class="r" style="left:1485px;top:658px;width:1px;height:177px;background:rgba(255,255,255,0.08);"></div>
<div class="r" style="left:1570px;top:658px;width:1px;height:177px;background:rgba(255,255,255,0.08);"></div>
<div class="r" style="left:1655px;top:658px;width:1px;height:177px;background:rgba(255,255,255,0.08);"></div>
<div class="r" style="left:1740px;top:658px;width:1px;height:177px;background:rgba(255,255,255,0.08);"></div>
<div class="r" style="left:1825px;top:658px;width:1px;height:177px;background:rgba(255,255,255,0.08);"></div>
<div class="r" style="left:10px;top:702px;width:200px;height:135px;background:#4595a8;"></div>
<div class="t" style="left:25.0px;top:762.10px;font-family:'Liberation Sans',sans-serif;font-weight:700;font-style:normal;font-size:12.5px;color:#fff;letter-spacing:-0.400px;">1. -English</div>
<svg class="r" style="left:1061px;top:690px;" width="848" height="6" viewBox="0 0 848 6"><rect x="1.00" y="0" width="1" height="6" fill="#a5a5a5"/><rect x="4.54" y="0" width="1" height="6" fill="#a5a5a5"/><rect x="8.08" y="0" width="1" height="6" fill="#a5a5a5"/><rect x="11.63" y="0" width="1" height="6" fill="#a5a5a5"/><rect x="15.17" y="0" width="1" height="6" fill="#a5a5a5"/><rect x="18.71" y="0" width="1" height="6" fill="#a5a5a5"/><rect x="22.25" y="0" width="1" height="6" fill="#a5a5a5"/><rect x="25.79" y="0" width="1" height="6" fill="#a5a5a5"/><rect x="29.33" y="0" width="1" height="6" fill="#a5a5a5"/><rect x="32.88" y="0" width="1" height="6" fill="#a5a5a5"/><rect x="36.42" y="0" width="1" height="6" fill="#a5a5a5"/><rect x="39.96" y="0" width="1" height="6" fill="#a5a5a5"/><rect x="43.50" y="0" width="1" height="6" fill="#a5a5a5"/><rect x="47.04" y="0" width="1" height="6" fill="#a5a5a5"/><rect x="50.58" y="0" width="1" height="6" fill="#a5a5a5"/><rect x="54.13" y="0" width="1" height="6" fill="#a5a5a5"/><rect x="57.67" y="0" width="1" height="6" fill="#a5a5a5"/><rect x="61.21" y="0" width="1" height="6" fill="#a5a5a5"/><rect x="64.75" y="0" width="1" height="6" fill="#a5a5a5"/><rect x="68.29" y="0" width="1" height="6" fill="#a5a5a5"/><rect x="71.83" y="0" width="1" height="6" fill="#a5a5a5"/><rect x="75.38" y="0" width="1" height="6" fill="#a5a5a5"/><rect x="78.92" y="0" width="1" height="6" fill="#a5a5a5"/><rect x="82.46" y="0" width="1" height="6" fill="#a5a5a5"/><rect x="86.00" y="0" width="1" height="6" fill="#a5a5a5"/><rect x="89.54" y="0" width="1" height="6" fill="#a5a5a5"/><rect x="93.08" y="0" width="1" height="6" fill="#a5a5a5"/><rect x="96.63" y="0" width="1" height="6" fill="#a5a5a5"/><rect x="100.17" y="0" width="1" height="6" fill="#a5a5a5"/><rect x="103.71" y="0" width="1" height="6" fill="#a5a5a5"/><rect x="107.25" y="0" width="1" height="6" fill="#a5a5a5"/><rect x="110.79" y="0" width="1" height="6" fill="#a5a5a5"/><rect x="114.33" y="0" width="1" height="6" fill="#a5a5a5"/><rect x="117.88" y="0" width="1" height="6" fill="#a5a5a5"/><rect x="121.42" y="0" width="1" height="6" fill="#a5a5a5"/><rect x="124.96" y="0" width="1" height="6" fill="#a5a5a5"/><rect x="128.50" y="0" width="1" height="6" fill="#a5a5a5"/><rect x="132.04" y="0" width="1" height="6" fill="#a5a5a5"/><rect x="135.58" y="0" width="1" height="6" fill="#a5a5a5"/><rect x="139.13" y="0" width="1" height="6" fill="#a5a5a5"/><rect x="142.67" y="0" width="1" height="6" fill="#a5a5a5"/><rect x="146.21" y="0" width="1" height="6" fill="#a5a5a5"/><rect x="149.75" y="0" width="1" height="6" fill="#a5a5a5"/><rect x="153.29" y="0" width="1" height="6" fill="#a5a5a5"/><rect x="156.83" y="0" width="1" height="6" fill="#a5a5a5"/><rect x="160.38" y="0" width="1" height="6" fill="#a5a5a5"/><rect x="163.92" y="0" width="1" height="6" fill="#a5a5a5"/><rect x="167.46" y="0" width="1" height="6" fill="#a5a5a5"/><rect x="171.00" y="0" width="1" height="6" fill="#a5a5a5"/><rect x="174.54" y="0" width="1" height="6" fill="#a5a5a5"/><rect x="178.08" y="0" width="1" height="6" fill="#a5a5a5"/><rect x="181.63" y="0" width="1" height="6" fill="#a5a5a5"/><rect x="185.17" y="0" width="1" height="6" fill="#a5a5a5"/><rect x="188.71" y="0" width="1" height="6" fill="#a5a5a5"/><rect x="192.25" y="0" width="1" height="6" fill="#a5a5a5"/><rect x="195.79" y="0" width="1" height="6" fill="#a5a5a5"/><rect x="199.33" y="0" width="1" height="6" fill="#a5a5a5"/><rect x="202.88" y="0" width="1" height="6" fill="#a5a5a5"/><rect x="206.42" y="0" width="1" height="6" fill="#a5a5a5"/><rect x="209.96" y="0" width="1" height="6" fill="#a5a5a5"/><rect x="213.50" y="0" width="1" height="6" fill="#a5a5a5"/><rect x="217.04" y="0" width="1" height="6" fill="#a5a5a5"/><rect x="220.58" y="0" width="1" height="6" fill="#a5a5a5"/><rect x="224.13" y="0" width="1" height="6" fill="#a5a5a5"/><rect x="227.67" y="0" width="1" height="6" fill="#a5a5a5"/><rect x="231.21" y="0" width="1" height="6" fill="#a5a5a5"/><rect x="234.75" y="0" width="1" height="6" fill="#a5a5a5"/><rect x="238.29" y="0" width="1" height="6" fill="#a5a5a5"/><rect x="241.83" y="0" width="1" height="6" fill="#a5a5a5"/><rect x="245.38" y="0" width="1" height="6" fill="#a5a5a5"/><rect x="248.92" y="0" width="1" height="6" fill="#a5a5a5"/><rect x="252.46" y="0" width="1" height="6" fill="#a5a5a5"/><rect x="256.00" y="0" width="1" height="6" fill="#a5a5a5"/><rect x="259.54" y="0" width="1" height="6" fill="#a5a5a5"/><rect x="263.08" y="0" width="1" height="6" fill="#a5a5a5"/><rect x="266.63" y="0" width="1" height="6" fill="#a5a5a5"/><rect x="270.17" y="0" width="1" height="6" fill="#a5a5a5"/><rect x="273.71" y="0" width="1" height="6" fill="#a5a5a5"/><rect x="277.25" y="0" width="1" height="6" fill="#a5a5a5"/><rect x="280.79" y="0" width="1" height="6" fill="#a5a5a5"/><rect x="284.33" y="0" width="1" height="6" fill="#a5a5a5"/><rect x="287.88" y="0" width="1" height="6" fill="#a5a5a5"/><rect x="291.42" y="0" width="1" height="6" fill="#a5a5a5"/><rect x="294.96" y="0" width="1" height="6" fill="#a5a5a5"/><rect x="298.50" y="0" width="1" height="6" fill="#a5a5a5"/><rect x="302.04" y="0" width="1" height="6" fill="#a5a5a5"/><rect x="305.58" y="0" width="1" height="6" fill="#a5a5a5"/><rect x="309.13" y="0" width="1" height="6" fill="#a5a5a5"/><rect x="312.67" y="0" width="1" height="6" fill="#a5a5a5"/><rect x="316.21" y="0" width="1" height="6" fill="#a5a5a5"/><rect x="319.75" y="0" width="1" height="6" fill="#a5a5a5"/><rect x="323.29" y="0" width="1" height="6" fill="#a5a5a5"/><rect x="326.83" y="0" width="1" height="6" fill="#a5a5a5"/><rect x="330.38" y="0" width="1" height="6" fill="#a5a5a5"/><rect x="333.92" y="0" width="1" height="6" fill="#a5a5a5"/><rect x="337.46" y="0" width="1" height="6" fill="#a5a5a5"/><rect x="341.00" y="0" width="1" height="6" fill="#a5a5a5"/><rect x="344.54" y="0" width="1" height="6" fill="#a5a5a5"/><rect x="348.08" y="0" width="1" height="6" fill="#a5a5a5"/><rect x="351.63" y="0" width="1" height="6" fill="#a5a5a5"/><rect x="355.17" y="0" width="1" height="6" fill="#a5a5a5"/><rect x="358.71" y="0" width="1" height="6" fill="#a5a5a5"/><rect x="362.25" y="0" width="1" height="6" fill="#a5a5a5"/><rect x="365.79" y="0" width="1" height="6" fill="#a5a5a5"/><rect x="369.33" y="0" width="1" height="6" fill="#a5a5a5"/><rect x="372.88" y="0" width="1" height="6" fill="#a5a5a5"/><rect x="376.42" y="0" width="1" height="6" fill="#a5a5a5"/><rect x="379.96" y="0" width="1" height="6" fill="#a5a5a5"/><rect x="383.50" y="0" width="1" height="6" fill="#a5a5a5"/><rect x="387.04" y="0" width="1" height="6" fill="#a5a5a5"/><rect x="390.58" y="0" width="1" height="6" fill="#a5a5a5"/><rect x="394.13" y="0" width="1" height="6" fill="#a5a5a5"/><rect x="397.67" y="0" width="1" height="6" fill="#a5a5a5"/><rect x="401.21" y="0" width="1" height="6" fill="#a5a5a5"/><rect x="404.75" y="0" width="1" height="6" fill="#a5a5a5"/><rect x="408.29" y="0" width="1" height="6" fill="#a5a5a5"/><rect x="411.83" y="0" width="1" height="6" fill="#a5a5a5"/><rect x="415.38" y="0" width="1" height="6" fill="#a5a5a5"/><rect x="418.92" y="0" width="1" height="6" fill="#a5a5a5"/><rect x="422.46" y="0" width="1" height="6" fill="#a5a5a5"/><rect x="426.00" y="0" width="1" height="6" fill="#a5a5a5"/><rect x="429.54" y="0" width="1" height="6" fill="#a5a5a5"/><rect x="433.08" y="0" width="1" height="6" fill="#a5a5a5"/><rect x="436.63" y="0" width="1" height="6" fill="#a5a5a5"/><rect x="440.17" y="0" width="1" height="6" fill="#a5a5a5"/><rect x="443.71" y="0" width="1" height="6" fill="#a5a5a5"/><rect x="447.25" y="0" width="1" height="6" fill="#a5a5a5"/><rect x="450.79" y="0" width="1" height="6" fill="#a5a5a5"/><rect x="454.33" y="0" width="1" height="6" fill="#a5a5a5"/><rect x="457.88" y="0" width="1" height="6" fill="#a5a5a5"/><rect x="461.42" y="0" width="1" height="6" fill="#a5a5a5"/><rect x="464.96" y="0" width="1" height="6" fill="#a5a5a5"/><rect x="468.50" y="0" width="1" height="6" fill="#a5a5a5"/><rect x="472.04" y="0" width="1" height="6" fill="#a5a5a5"/><rect x="475.58" y="0" width="1" height="6" fill="#a5a5a5"/><rect x="479.13" y="0" width="1" height="6" fill="#a5a5a5"/><rect x="482.67" y="0" width="1" height="6" fill="#a5a5a5"/><rect x="486.21" y="0" width="1" height="6" fill="#a5a5a5"/><rect x="489.75" y="0" width="1" height="6" fill="#a5a5a5"/><rect x="493.29" y="0" width="1" height="6" fill="#a5a5a5"/><rect x="496.83" y="0" width="1" height="6" fill="#a5a5a5"/><rect x="500.38" y="0" width="1" height="6" fill="#a5a5a5"/><rect x="503.92" y="0" width="1" height="6" fill="#a5a5a5"/><rect x="507.46" y="0" width="1" height="6" fill="#a5a5a5"/><rect x="511.00" y="0" width="1" height="6" fill="#a5a5a5"/><rect x="514.54" y="0" width="1" height="6" fill="#a5a5a5"/><rect x="518.08" y="0" width="1" height="6" fill="#a5a5a5"/><rect x="521.63" y="0" width="1" height="6" fill="#a5a5a5"/><rect x="525.17" y="0" width="1" height="6" fill="#a5a5a5"/><rect x="528.71" y="0" width="1" height="6" fill="#a5a5a5"/><rect x="532.25" y="0" width="1" height="6" fill="#a5a5a5"/><rect x="535.79" y="0" width="1" height="6" fill="#a5a5a5"/><rect x="539.33" y="0" width="1" height="6" fill="#a5a5a5"/><rect x="542.88" y="0" width="1" height="6" fill="#a5a5a5"/><rect x="546.42" y="0" width="1" height="6" fill="#a5a5a5"/><rect x="549.96" y="0" width="1" height="6" fill="#a5a5a5"/><rect x="553.50" y="0" width="1" height="6" fill="#a5a5a5"/><rect x="557.04" y="0" width="1" height="6" fill="#a5a5a5"/><rect x="560.58" y="0" width="1" height="6" fill="#a5a5a5"/><rect x="564.13" y="0" width="1" height="6" fill="#a5a5a5"/><rect x="567.67" y="0" width="1" height="6" fill="#a5a5a5"/><rect x="571.21" y="0" width="1" height="6" fill="#a5a5a5"/><rect x="574.75" y="0" width="1" height="6" fill="#a5a5a5"/><rect x="578.29" y="0" width="1" height="6" fill="#a5a5a5"/><rect x="581.83" y="0" width="1" height="6" fill="#a5a5a5"/><rect x="585.38" y="0" width="1" height="6" fill="#a5a5a5"/><rect x="588.92" y="0" width="1" height="6" fill="#a5a5a5"/><rect x="592.46" y="0" width="1" height="6" fill="#a5a5a5"/><rect x="596.00" y="0" width="1" height="6" fill="#a5a5a5"/><rect x="599.54" y="0" width="1" height="6" fill="#a5a5a5"/><rect x="603.08" y="0" width="1" height="6" fill="#a5a5a5"/><rect x="606.63" y="0" width="1" height="6" fill="#a5a5a5"/><rect x="610.17" y="0" width="1" height="6" fill="#a5a5a5"/><rect x="613.71" y="0" width="1" height="6" fill="#a5a5a5"/><rect x="617.25" y="0" width="1" height="6" fill="#a5a5a5"/><rect x="620.79" y="0" width="1" height="6" fill="#a5a5a5"/><rect x="624.33" y="0" width="1" height="6" fill="#a5a5a5"/><rect x="627.88" y="0" width="1" height="6" fill="#a5a5a5"/><rect x="631.42" y="0" width="1" height="6" fill="#a5a5a5"/><rect x="634.96" y="0" width="1" height="6" fill="#a5a5a5"/><rect x="638.50" y="0" width="1" height="6" fill="#a5a5a5"/><rect x="642.04" y="0" width="1" height="6" fill="#a5a5a5"/><rect x="645.58" y="0" width="1" height="6" fill="#a5a5a5"/><rect x="649.13" y="0" width="1" height="6" fill="#a5a5a5"/><rect x="652.67" y="0" width="1" height="6" fill="#a5a5a5"/><rect x="656.21" y="0" width="1" height="6" fill="#a5a5a5"/><rect x="659.75" y="0" width="1" height="6" fill="#a5a5a5"/><rect x="663.29" y="0" width="1" height="6" fill="#a5a5a5"/><rect x="666.83" y="0" width="1" height="6" fill="#a5a5a5"/><rect x="670.38" y="0" width="1" height="6" fill="#a5a5a5"/><rect x="673.92" y="0" width="1" height="6" fill="#a5a5a5"/><rect x="677.46" y="0" width="1" height="6" fill="#a5a5a5"/><rect x="681.00" y="0" width="1" height="6" fill="#a5a5a5"/><rect x="684.54" y="0" width="1" height="6" fill="#a5a5a5"/><rect x="688.08" y="0" width="1" height="6" fill="#a5a5a5"/><rect x="691.63" y="0" width="1" height="6" fill="#a5a5a5"/><rect x="695.17" y="0" width="1" height="6" fill="#a5a5a5"/><rect x="698.71" y="0" width="1" height="6" fill="#a5a5a5"/><rect x="702.25" y="0" width="1" height="6" fill="#a5a5a5"/><rect x="705.79" y="0" width="1" height="6" fill="#a5a5a5"/><rect x="709.33" y="0" width="1" height="6" fill="#a5a5a5"/><rect x="712.88" y="0" width="1" height="6" fill="#a5a5a5"/><rect x="716.42" y="0" width="1" height="6" fill="#a5a5a5"/><rect x="719.96" y="0" width="1" height="6" fill="#a5a5a5"/><rect x="723.50" y="0" width="1" height="6" fill="#a5a5a5"/><rect x="727.04" y="0" width="1" height="6" fill="#a5a5a5"/><rect x="730.58" y="0" width="1" height="6" fill="#a5a5a5"/><rect x="734.13" y="0" width="1" height="6" fill="#a5a5a5"/><rect x="737.67" y="0" width="1" height="6" fill="#a5a5a5"/><rect x="741.21" y="0" width="1" height="6" fill="#a5a5a5"/><rect x="744.75" y="0" width="1" height="6" fill="#a5a5a5"/><rect x="748.29" y="0" width="1" height="6" fill="#a5a5a5"/><rect x="751.83" y="0" width="1" height="6" fill="#a5a5a5"/><rect x="755.38" y="0" width="1" height="6" fill="#a5a5a5"/><rect x="758.92" y="0" width="1" height="6" fill="#a5a5a5"/><rect x="762.46" y="0" width="1" height="6" fill="#a5a5a5"/><rect x="766.00" y="0" width="1" height="6" fill="#a5a5a5"/><rect x="769.54" y="0" width="1" height="6" fill="#a5a5a5"/><rect x="773.08" y="0" width="1" height="6" fill="#a5a5a5"/><rect x="776.63" y="0" width="1" height="6" fill="#a5a5a5"/><rect x="780.17" y="0" width="1" height="6" fill="#a5a5a5"/><rect x="783.71" y="0" width="1" height="6" fill="#a5a5a5"/><rect x="787.25" y="0" width="1" height="6" fill="#a5a5a5"/><rect x="790.79" y="0" width="1" height="6" fill="#a5a5a5"/><rect x="794.33" y="0" width="1" height="6" fill="#a5a5a5"/><rect x="797.88" y="0" width="1" height="6" fill="#a5a5a5"/><rect x="801.42" y="0" width="1" height="6" fill="#a5a5a5"/><rect x="804.96" y="0" width="1" height="6" fill="#a5a5a5"/><rect x="808.50" y="0" width="1" height="6" fill="#a5a5a5"/><rect x="812.04" y="0" width="1" height="6" fill="#a5a5a5"/><rect x="815.58" y="0" width="1" height="6" fill="#a5a5a5"/><rect x="819.13" y="0" width="1" height="6" fill="#a5a5a5"/><rect x="822.67" y="0" width="1" height="6" fill="#a5a5a5"/><rect x="826.21" y="0" width="1" height="6" fill="#a5a5a5"/><rect x="829.75" y="0" width="1" height="6" fill="#a5a5a5"/><rect x="833.29" y="0" width="1" height="6" fill="#a5a5a5"/><rect x="836.83" y="0" width="1" height="6" fill="#a5a5a5"/><rect x="840.38" y="0" width="1" height="6" fill="#a5a5a5"/><rect x="843.92" y="0" width="1" height="6" fill="#a5a5a5"/><rect x="847.46" y="0" width="1" height="6" fill="#a5a5a5"/></svg>
<div class="r" style="left:1229px;top:678px;width:2px;height:18px;background:#e6e6e6;"></div>
<div class="t" style="left:1198.4px;top:662.50px;font-family:'Liberation Sans',sans-serif;font-weight:700;font-style:normal;font-size:12.5px;color:#cfcfcf;letter-spacing:-0.470px;">00:00:02:00</div>
<div class="r" style="left:1399px;top:678px;width:2px;height:18px;background:#e6e6e6;"></div>
<div class="t" style="left:1368.4px;top:662.50px;font-family:'Liberation Sans',sans-serif;font-weight:700;font-style:normal;font-size:12.5px;color:#cfcfcf;letter-spacing:-0.470px;">00:00:04:00</div>
<div class="r" style="left:1569px;top:678px;width:2px;height:18px;background:#e6e6e6;"></div>
<div class="t" style="left:1538.4px;top:662.50px;font-family:'Liberation Sans',sans-serif;font-weight:700;font-style:normal;font-size:12.5px;color:#cfcfcf;letter-spacing:-0.470px;">00:00:06:00</div>
<div class="r" style="left:1739px;top:678px;width:2px;height:18px;background:#e6e6e6;"></div>
<div class="t" style="left:1708.4px;top:662.50px;font-family:'Liberation Sans',sans-serif;font-weight:700;font-style:normal;font-size:12.5px;color:#cfcfcf;letter-spacing:-0.470px;">00:00:08:00</div>
<div class="r" style="left:1059px;top:675px;width:2px;height:162px;background:#e8553f;"></div>
<div class="r" style="left:1032px;top:662px;width:56px;height:14px;background:#e8553f;"></div>
<svg class="r" style="left:1054px;top:675px;" width="12" height="6" viewBox="0 0 12 6"><polygon points="0,0 12,0 6,6" fill="#e8553f"/></svg>
<div class="t" style="left:1028.5px;top:662.40px;font-family:'Liberation Sans',sans-serif;font-weight:700;font-style:normal;font-size:12.5px;color:#bbb;">(</div>
<div class="t" style="left:1088.5px;top:662.40px;font-family:'Liberation Sans',sans-serif;font-weight:700;font-style:normal;font-size:12.5px;color:#bbb;">)</div>
<div class="t" style="left:1034.0px;top:662.40px;font-family:'Liberation Sans',sans-serif;font-weight:700;font-style:normal;font-size:12.5px;color:#fff;letter-spacing:-1.550px;">00:00:00:00</div>
<div class="r" style="left:1741.9px;top:685.5px;width:23px;height:23px;background:#1b1b1b;border-radius:50%;"></div>
<div class="r" style="left:1768.5px;top:685.5px;width:23px;height:23px;background:#1b1b1b;border-radius:50%;"></div>
<div class="r" style="left:1795.3px;top:685.5px;width:23px;height:23px;background:#1b1b1b;border-radius:50%;"></div>
<div class="r" style="left:1821.2px;top:685.5px;width:23px;height:23px;background:#1b1b1b;border-radius:50%;"></div>
<div class="r" style="left:1847.8px;top:685.5px;width:23px;height:23px;background:#1b1b1b;border-radius:50%;"></div>
<div class="t" style="left:1750.0px;top:690.08px;font-family:'Liberation Sans',sans-serif;font-weight:700;font-style:normal;font-size:12px;color:#fff;">1</div>
<div class="r" style="left:1773px;top:695.5px;width:14px;height:3.5px;background:#fff;"></div>
<svg class="r" style="left:1799px;top:689px;" width="16" height="16" viewBox="0 0 16 16"><path d="M12.5,4.5 A6,6 0 1 0 13.5,10" fill="none" stroke="#fff" stroke-width="2"/><polygon points="9,1 15.5,1.5 14,7.5" fill="#fff"/></svg>
<div class="r" style="left:1826px;top:695px;width:14px;height:4.5px;background:#fff;"></div>
<div class="r" style="left:1830.5px;top:690.5px;width:4.5px;height:14px;background:#fff;"></div>
<svg class="r" style="left:1851px;top:692px;" width="16" height="10" viewBox="0 0 16 10"><path d="M0.5,5 C3,1.5 5.5,0.5 8,0.5 C10.5,0.5 13,1.5 15.5,5 C13,8.5 10.5,9.5 8,9.5 C5.5,9.5 3,8.5 0.5,5Z" fill="#ddd"/><circle cx="8" cy="5" r="2.8" fill="#1b1b1b"/><circle cx="8.8" cy="4.2" r="1.2" fill="#ddd"/></svg>
<div class="r" style="left:1711px;top:809px;width:180px;height:34px;background:#ececec;box-shadow:0 1px 3px rgba(0,0,0,0.3);"></div>
<div class="t" style="left:1724.0px;top:818.34px;font-family:'Liberation Sans',sans-serif;font-weight:400;font-style:normal;font-size:13.5px;color:#333;letter-spacing:-0.550px;-webkit-text-stroke:0.2px #333;">Project saved</div>
<div class="t" style="left:1309.0px;top:841.59px;font-family:'Liberation Sans',sans-serif;font-weight:400;font-style:normal;font-size:13.8px;color:#a0a0a0;letter-spacing:-0.753px;-webkit-text-stroke:0.25px #a0a0a0;">© 2012 - 2025  OOONA.NET ltd. All Rights Reserved. OOONA®. Version 3.45.77 (Build time: 31/03/2025 09:59)</div>
</body></html>
